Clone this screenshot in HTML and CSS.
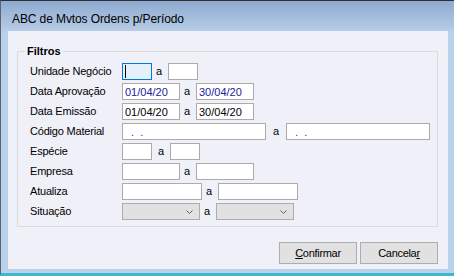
FILE: index.html
```html
<!DOCTYPE html>
<html lang="pt-BR">
<head>
  <meta charset="UTF-8" />
  <title>ABC de Mvtos Ordens p/Período</title>
  <link rel="stylesheet" href="styles.css">
</head>
<body>

  <div class="window">
    <div class="titlebar">ABC de Mvtos Ordens p/Período</div>

    <div class="client">
      <fieldset class="group">
        <legend>Filtros</legend>
        <div class="form">
          <label>Unidade Negócio</label>
          <div class="pair">
            <span class="field w30 focused"><span class="caret"></span></span>
            <span class="sep">a</span>
            <input class="field w30" type="text">
          </div>

          <label>Data Aprovação</label>
          <div class="pair">
            <input class="field w58 blue" type="text" value="01/04/20">
            <span class="sep">a</span>
            <input class="field w58 blue" type="text" value="30/04/20">
          </div>

          <label>Data Emissão</label>
          <div class="pair">
            <input class="field w58" type="text" value="01/04/20">
            <span class="sep">a</span>
            <input class="field w58" type="text" value="30/04/20">
          </div>

          <label>Código Material</label>
          <div class="pair">
            <input class="field w144 mask" type="text" value="  .  .">
            <span class="sep wide">a</span>
            <input class="field w144 mask" type="text" value="  .  .">
          </div>

          <label>Espécie</label>
          <div class="pair">
            <input class="field w30" type="text">
            <span class="sep mid">a</span>
            <input class="field w30" type="text">
          </div>

          <label>Empresa</label>
          <div class="pair">
            <input class="field w58" type="text">
            <span class="sep">a</span>
            <input class="field w58" type="text">
          </div>

          <label>Atualiza</label>
          <div class="pair">
            <input class="field w80" type="text">
            <span class="sep">a</span>
            <input class="field w80" type="text">
          </div>

          <label>Situação</label>
          <div class="pair">
            <span class="combo w78">
              <svg width="7" height="4" viewBox="0 0 7 4"><path d="M0.5 0.5 L3.5 3.5 L6.5 0.5" fill="none" stroke="#606060" stroke-width="1"/></svg>
            </span>
            <span class="sep">a</span>
            <span class="combo w78">
              <svg width="7" height="4" viewBox="0 0 7 4"><path d="M0.5 0.5 L3.5 3.5 L6.5 0.5" fill="none" stroke="#606060" stroke-width="1"/></svg>
            </span>
          </div>
        </div>
      </fieldset>

      <div class="actions">
        <button class="btn" type="button"><u>C</u>onfirmar</button>
        <button class="btn" type="button">Cancela<u>r</u></button>
      </div>
    </div>
  </div>

</body>
</html>
```

FILE: styles.css
```css
body {
  margin: 0;
  font-family: 'Liberation Sans', Arial, sans-serif;
  color: #000;
}

.window {
  width: 454px;
  height: 276px;
  box-sizing: border-box;
  border-top: 1px solid #2f2f2f;
  border-left: 1px solid #5b6470;
  border-bottom: 3px solid #3ab8d3;
  background: #b9d1ea;
  display: flex;
  flex-direction: column;
}

.titlebar {
  height: 30px;
  box-sizing: border-box;
  padding: 11px 0 0 11px;
  background: linear-gradient(#8eaad0, #b7cde7);
  font-size: 12px;
  line-height: 15px;
  letter-spacing: -0.1px;
}

.client {
  height: 238px;
  box-sizing: border-box;
  margin: 0 6px 0 7px;
  padding: 13px 10px 0 9px;
  background: #f0f1f8;
}

.group {
  margin: 0;
  padding: 4px 12px 6px 12px;
  border: 1px solid #dcdcdc;
  min-width: 0;
}

.group legend {
  margin-left: -5px;
  padding: 0 2px;
  font-size: 11px;
  font-weight: bold;
  line-height: 15px;
}

.form {
  display: grid;
  grid-template-columns: 92px auto;
  grid-auto-rows: 17px;
  row-gap: 3px;
}

.form label {
  font-size: 11px;
  line-height: 17px;
  letter-spacing: -0.2px;
}

.pair {
  display: flex;
  align-items: stretch;
}

.field {
  box-sizing: border-box;
  height: 17px;
  margin: 0;
  padding: 0 2px;
  border: 1px solid #ababab;
  border-radius: 0;
  background: #fff;
  font-family: 'Liberation Sans', Arial, sans-serif;
  font-size: 11px;
  color: #000;
  outline: none;
  white-space: pre;
}

.field.blue {
  color: #23209e;
}

.field.mask {
  color: #1f1fd6;
}

.field.focused {
  display: inline-block;
  position: relative;
  border-color: #0078d7;
  background: #e5f0fb;
}

.caret {
  position: absolute;
  left: 2px;
  top: 1px;
  width: 1px;
  height: 13px;
  background: #000;
}

.w30 { width: 30px; }
.w58 { width: 58px; }
.w78 { width: 78px; }
.w80 { width: 80px; }
.w144 { width: 144px; }

.sep {
  width: 16px;
  box-sizing: border-box;
  padding-left: 4px;
  font-size: 11px;
  line-height: 17px;
}

.sep.wide {
  width: 20px;
  padding-left: 7px;
}

.sep.mid {
  width: 18px;
  padding-left: 6px;
}

.combo {
  box-sizing: border-box;
  height: 17px;
  border: 1px solid #adadad;
  background: #e1e1e1;
  display: flex;
  align-items: center;
  justify-content: flex-end;
  padding: 1px 6px 0 0;
}

.actions {
  display: flex;
  justify-content: flex-end;
  gap: 3px;
  margin-top: 15px;
}

.btn {
  width: 78px;
  height: 22px;
  padding: 0;
  border: 1px solid #adadad;
  border-radius: 0;
  background: #e1e1e1;
  font-family: 'Liberation Sans', Arial, sans-serif;
  font-size: 11px;
  letter-spacing: -0.3px;
  color: #000;
}

.btn u {
  text-underline-offset: 1px;
}
```
